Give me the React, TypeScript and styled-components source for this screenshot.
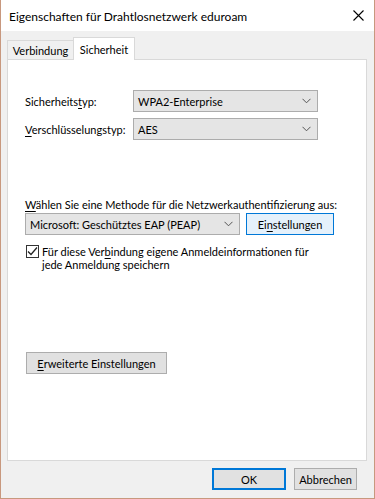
import React from "react";
import styled, { createGlobalStyle } from "styled-components";

const Global = createGlobalStyle`
  html, body { margin: 0; padding: 0; background: #ffffff; }
  body { font-family: Lato, "Noto Sans", sans-serif; font-size: 11px; line-height: 15px; color: #000; }
  * { box-sizing: border-box; }
`;

const Window = styled.div`
  width: 375px;
  height: 499px;
  display: flex;
  flex-direction: column;
  border: 1px solid #c8987e;
  border-top: none;
  background: #f0f0f0;
`;

const TitleBar = styled.div`
  height: 31px;
  flex: none;
  background: #ffffff;
  display: flex;
  align-items: center;
  justify-content: space-between;
  padding: 0 9px 0 8px;
`;

const Title = styled.div`
  font-size: 12px;
  color: #000;
  padding-top: 1px;
`;

const CloseBox = styled.div`
  width: 12px;
  height: 12px;
  display: flex;
`;

const Body = styled.div`
  flex: 1;
  display: flex;
  flex-direction: column;
  padding: 6px 7px 8px 6px;
`;

const TabRow = styled.div`
  display: flex;
  align-items: flex-end;
  height: 22px;
  flex: none;
  position: relative;
  z-index: 1;
`;

const Tab = styled.div<{ $active?: boolean; $width: number }>`
  width: ${(p) => p.$width}px;
  height: ${(p) => (p.$active ? "23px" : "19px")};
  padding-top: ${(p) => (p.$active ? "0" : "1px")};
  display: flex;
  align-items: center;
  justify-content: center;
  background: ${(p) => (p.$active ? "#ffffff" : "#f0f0f0")};
  border: 1px solid #d9d9d9;
  border-bottom: none;
  margin-bottom: ${(p) => (p.$active ? "-1px" : "0")};
  margin-left: ${(p) => (p.$active ? "-1px" : "0")};
`;

const Panel = styled.div`
  height: 402px;
  flex: none;
  background: #ffffff;
  border: 1px solid #d9d9d9;
  display: flex;
  flex-direction: column;
  padding: 30px 0 0 17px;
`;

const FieldGrid = styled.div`
  display: grid;
  grid-template-columns: 108px 185px;
  row-gap: 6px;
  align-items: center;
`;

const Label = styled.div`
  white-space: nowrap;
`;

const U = styled.span`
  text-decoration: underline;
  text-underline-offset: 2px;
`;

const Select = styled.div<{ $width: number }>`
  width: ${(p) => p.$width}px;
  height: 22px;
  background: #e5e5e5;
  border: 1px solid #acacac;
  display: flex;
  align-items: center;
  justify-content: space-between;
  padding: 0 6px 0 4px;
  white-space: nowrap;
`;

const Section = styled.div`
  margin-top: 57px;
  display: flex;
  flex-direction: column;
`;

const MethodRow = styled.div`
  display: flex;
  gap: 6px;
  margin-top: 1px;
`;

const Button = styled.div<{ $width: number; $variant?: "default" | "hot" }>`
  width: ${(p) => p.$width}px;
  height: 22px;
  display: flex;
  align-items: center;
  justify-content: center;
  white-space: nowrap;
  background: ${(p) => (p.$variant === "hot" ? "#e5f1fb" : "#e1e1e1")};
  border: 1px solid ${(p) => (p.$variant ? "#0078d7" : "#adadad")};
  box-shadow: ${(p) => (p.$variant === "default" ? "inset 0 0 0 1px #0078d7" : "none")};
`;

const CheckRow = styled.div`
  display: flex;
  gap: 3px;
  margin-top: 9px;
  padding-left: 1px;
`;

const CheckBox = styled.div`
  width: 13px;
  height: 13px;
  flex: none;
  margin-top: 1px;
  border: 1px solid #333333;
  background: #ffffff;
  display: flex;
  align-items: center;
  justify-content: center;
`;

const CheckText = styled.div`
  line-height: 13px;
  white-space: nowrap;
  padding-top: 1px;
`;

const AdvancedWrap = styled.div`
  margin-top: 81px;
  padding-left: 1px;
`;

const Footer = styled.div`
  display: flex;
  justify-content: flex-end;
  gap: 8px;
  margin-top: 7px;
  padding-right: 10px;
`;

const Chevron = () => (
  <svg width="9" height="6" viewBox="0 0 9 6">
    <path d="M0.5 0.8 L4.5 4.8 L8.5 0.8" fill="none" stroke="#555" strokeWidth="1" />
  </svg>
);

const CloseIcon = () => (
  <svg width="11" height="11" viewBox="0 0 11 11">
    <path d="M0.5 0.5 L10.5 10.5 M10.5 0.5 L0.5 10.5" stroke="#000" strokeWidth="1.1" />
  </svg>
);

const Check = () => (
  <svg width="11" height="11" viewBox="0 0 11 11">
    <path d="M1 5.5 L4 8.5 L10 1.5" fill="none" stroke="#222" strokeWidth="1.3" />
  </svg>
);

export default function App() {
  return (
    <>
      <Global />
      <Window>
        <TitleBar>
          <Title>Eigenschaften für Drahtlosnetzwerk eduroam</Title>
          <CloseBox>
            <CloseIcon />
          </CloseBox>
        </TitleBar>
        <Body>
          <TabRow>
            <Tab $width={67}>Verbindung</Tab>
            <Tab $width={62} $active>
              Sicherheit
            </Tab>
          </TabRow>
          <Panel>
            <FieldGrid>
              <Label>
                Sicherheits<U>t</U>yp:
              </Label>
              <Select $width={185}>
                WPA2-Enterprise
                <Chevron />
              </Select>
              <Label>
                <U>V</U>erschlüsselungstyp:
              </Label>
              <Select $width={185}>
                AES
                <Chevron />
              </Select>
            </FieldGrid>
            <Section>
              <Label>
                <U>W</U>ählen Sie eine Methode für die Netzwerkauthentifizierung aus:
              </Label>
              <MethodRow>
                <Select $width={215}>
                  Microsoft: Geschütztes EAP (PEAP)
                  <Chevron />
                </Select>
                <Button $width={88} $variant="hot">
                  Ei<U>n</U>stellungen
                </Button>
              </MethodRow>
              <CheckRow>
                <CheckBox>
                  <Check />
                </CheckBox>
                <CheckText>
                  Für diese Ver<U>b</U>indung eigene Anmeldeinformationen für
                  <br />
                  jede Anmeldung speichern
                </CheckText>
              </CheckRow>
            </Section>
            <AdvancedWrap>
              <Button $width={141}>
                <U>E</U>rweiterte Einstellungen
              </Button>
            </AdvancedWrap>
          </Panel>
          <Footer>
            <Button $width={74} $variant="default">
              OK
            </Button>
            <Button $width={63}>Abbrechen</Button>
          </Footer>
        </Body>
      </Window>
    </>
  );
}
